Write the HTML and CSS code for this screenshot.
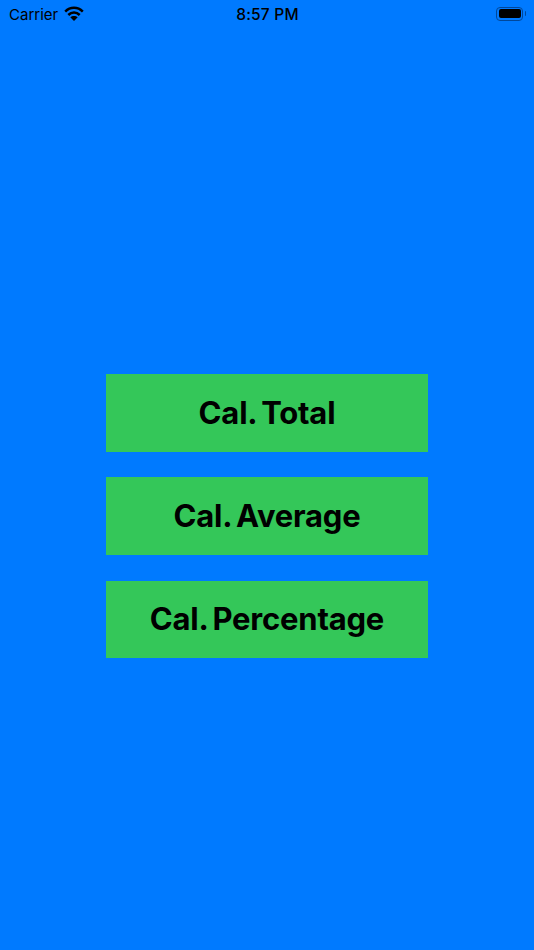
FILE: index.html
```html
<!DOCTYPE html>
<html lang="en">
  <head>
    <meta charset="UTF-8" />
    <title>Calculator</title>
    <link rel="stylesheet" href="styles.css">
  </head>
  <body>
    <header class="status-bar">
      <div class="status-left">
        <span>Carrier</span>
        <svg class="wifi" width="20" height="15" viewBox="0 0 20 15" aria-hidden="true">
          <path d="M1.200 5.600C3.500 3.300 6.600 1.800 10 1.800s6.500 1.500 8.800 3.800" fill="none" stroke="#000" stroke-width="2.500"/>
          <path d="M4.300 9C5.800 7.500 7.800 6.500 10 6.500s4.200 1 5.700 2.500" fill="none" stroke="#000" stroke-width="2.500"/>
          <path d="M6.300 11.300C7.300 10.400 8.600 9.900 10 9.900s2.700.5 3.700 1.400L10 15z" fill="#000"/>
        </svg>
      </div>
      <div class="status-time">8:57 PM</div>
      <div class="status-right">
        <div class="battery"><div class="battery-fill"></div></div>
        <div class="battery-cap"></div>
      </div>
    </header>
    <main class="actions">
      <button type="button" class="action-btn">Cal. Total</button>
      <button type="button" class="action-btn">Cal. Average</button>
      <button type="button" class="action-btn">Cal. Percentage</button>
    </main>
  </body>
</html>
```

FILE: styles.css
```css
html,
body {
  height: 100%;
}
body {
  margin: 0;
  background: #007aff;
  color: #000;
  font-family: Inter, "Liberation Sans", sans-serif;
  overflow: hidden;
}
.status-bar {
  display: grid;
  grid-template-columns: 1fr auto 1fr;
  align-items: center;
  height: 28px;
  padding: 0 8px 0 9px;
  font-size: 15px;
  font-weight: 400;
}
.status-left {
  display: flex;
  align-items: center;
  gap: 6px;
}
.wifi {
  margin-top: -1px;
}
.status-time {
  font-weight: 500;
  font-size: 15.500px;
  letter-spacing: 0.200px;
}
.status-right {
  display: flex;
  align-items: center;
  justify-content: flex-end;
  gap: 1.500px;
  margin-top: -1px;
}
.battery {
  box-sizing: border-box;
  width: 27px;
  height: 14px;
  padding: 1.500px;
  border: 1.500px solid #00479a;
  border-radius: 4px;
}
.battery-fill {
  height: 100%;
  background: #000;
  border-radius: 2px;
}
.battery-cap {
  width: 1.500px;
  height: 5px;
  background: #00479a;
  border-radius: 0 1px 1px 0;
}
.actions {
  display: flex;
  flex-direction: column;
  align-items: center;
  gap: 25.800px;
  padding-top: 346px;
}
.action-btn {
  width: 322px;
  height: 77.500px;
  padding: 0 0 1px;
  border: none;
  background: #34c759;
  color: #000;
  font-family: inherit;
  font-size: 31px;
  font-weight: 700;
  letter-spacing: -0.200px;
  word-spacing: -2.500px;
}
```
